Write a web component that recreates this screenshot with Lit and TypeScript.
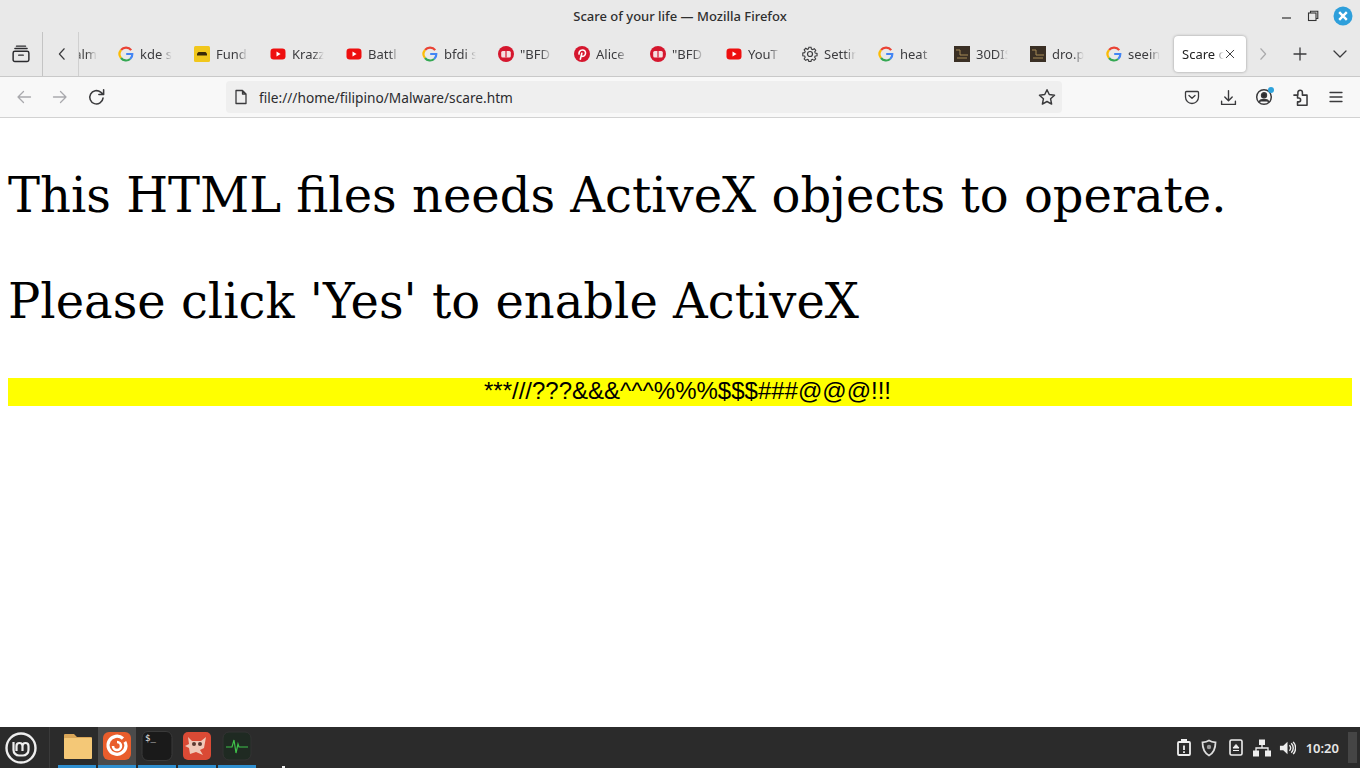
import { LitElement, html, css, svg } from "lit";
import { customElement } from "lit/decorators.js";

const G = svg`<svg width="16" height="16" viewBox="0 0 16 16" fill="none" stroke-width="2.200">
<path d="M13.200 4.200A6.400 6.400 0 0 0 3 4" stroke="#ea4335"/><path d="M3 4a6.400 6.400 0 0 0 0 8" stroke="#fbbc05"/><path d="M3 12a6.400 6.400 0 0 0 9.200 1" stroke="#34a853"/><path d="M12.200 13a6.200 6.200 0 0 0 2.100-5H8.200" stroke="#4285f4"/></svg>`;
const YT = svg`<svg width="16" height="16" viewBox="0 0 16 16"><rect x="0.500" y="2.500" width="15" height="11" rx="3.200" fill="#ee0f0f"/><path d="M6.500 5.600v4.800L10.600 8z" fill="#fff"/></svg>`;
const FUND = svg`<svg width="16" height="16" viewBox="0 0 16 16"><rect width="16" height="16" rx="1.500" fill="#f1c71c"/><path d="M3 9.500V7.500L4.500 6h7L13 7.500v2z" fill="#3a2a08"/></svg>`;
const BFD = svg`<svg width="16" height="16" viewBox="0 0 16 16"><circle cx="8" cy="8" r="8" fill="#d5172e"/><rect x="3.200" y="5" width="9.600" height="6.400" rx="1.500" fill="#f6dfe0"/><path d="M8 5v6.400" stroke="#d5172e" stroke-width="1.200"/></svg>`;
const PIN = svg`<svg width="16" height="16" viewBox="0 0 16 16"><circle cx="8" cy="8" r="8" fill="#d5172e"/><path d="M6.200 13.800 8 6.600M5.300 8.600C4.200 6.400 6 4 8.400 4c2.200 0 3.400 1.600 3.100 3.500-.3 1.900-1.700 3.100-3.100 2.800-.8-.2-1.200-.7-1.300-1.100" fill="none" stroke="#fff" stroke-width="1.600"/></svg>`;
const GEAR = svg`<svg width="16" height="16" viewBox="0 0 16 16" fill="none" stroke="#3a3a3c" stroke-width="1.200"><circle cx="8" cy="8" r="2.500"/><path d="M6.800 1h2.400l.4 2 1.300.6 1.800-1 1.600 1.800-1.100 1.700.5 1.300 2 .4v2.400l-2 .4-.6 1.300 1.100 1.700-1.700 1.700-1.700-1.100-1.300.6-.4 1.900H6.800l-.4-2-1.300-.5-1.700 1.100-1.700-1.700 1.100-1.700-.6-1.300-2-.4V7.300l2-.4.6-1.300-1.100-1.700 1.700-1.700 1.700 1.100 1.300-.6z" transform="translate(.6 .3) scale(.92)"/></svg>`;
const THUMB = svg`<svg width="16" height="16" viewBox="0 0 16 16"><rect width="16" height="16" fill="#3a2f24"/><path d="M2 4h4v5h8M3 12h10" stroke="#a58a55" stroke-width="1" fill="none"/></svg>`;

interface Tab { icon: unknown; label: string }
const tabs: Tab[] = [
  { icon: G, label: "kde s" },
  { icon: FUND, label: "Fund" },
  { icon: YT, label: "Krazz" },
  { icon: YT, label: "Battl" },
  { icon: G, label: "bfdi s" },
  { icon: BFD, label: "\"BFD" },
  { icon: PIN, label: "Alice" },
  { icon: BFD, label: "\"BFD" },
  { icon: YT, label: "YouT" },
  { icon: GEAR, label: "Settin" },
  { icon: G, label: "heat" },
  { icon: THUMB, label: "30DIS" },
  { icon: THUMB, label: "dro.p" },
  { icon: G, label: "seein" },
];

const ic = (w: number, body: unknown, stroke = "#3a3a3c") => svg`<svg width="${w}" height="${w}" viewBox="0 0 16 16" fill="none" stroke="${stroke}" stroke-width="1.300" stroke-linecap="round" stroke-linejoin="round">${body}</svg>`;

@customElement("app-root")
export class AppRoot extends LitElement {
  static styles = css`
    :host { display: flex; flex-direction: column; width: 1360px; height: 768px; overflow: hidden; position: relative; background: #fff; font-family: "Noto Sans", sans-serif; color: #2b2b2e; }
    .title { height: 32px; flex: none; background: #e9e9e9; display: flex; align-items: center; justify-content: center; position: relative; font-size: 13px; font-weight: 500; color: #2f2f2f; }
    .wm { position: absolute; right: 7px; top: 6px; display: flex; align-items: center; gap: 14px; }
    .wm svg { display: block; }
    .strip { height: 44px; flex: none; background: #e9e9e9; display: flex; align-items: stretch; border-bottom: 1px solid #c9c9c9; }
    .side { width: 42px; flex: none; display: flex; align-items: center; justify-content: center; border-right: 1px solid #c4c4c4; }
    .arrow { flex: none; width: 36px; display: flex; align-items: center; justify-content: flex-start; padding-left: 12px; box-sizing: border-box; }
    .partial { width: 30px; flex: none; box-sizing: border-box; display: flex; align-items: center; font-size: 13px; color: #444; overflow: hidden; justify-content: flex-end; padding-right: 11px; border-left: 1px solid #d0d0d0; margin-left: -1px; }
    .partial span { -webkit-mask-image: linear-gradient(90deg, rgba(0,0,0,.45), #000 35%, #000 55%, transparent); mask-image: linear-gradient(90deg, rgba(0,0,0,.45), #000 35%, #000 55%, transparent); }
    .tab { width: 76px; flex: none; box-sizing: border-box; display: flex; align-items: center; gap: 6px; padding-left: 10px; padding-right: 12px; font-size: 13px; color: #3c3c3f; white-space: nowrap; }
    .tab svg { flex: none; display: block; }
    .tab span { overflow: hidden; flex: 1; min-width: 0; -webkit-mask-image: linear-gradient(90deg, #000 65%, transparent); mask-image: linear-gradient(90deg, #000 65%, transparent); }
    .tab.active { width: 72px; margin: 4px 2px 4px 2px; padding: 0 10px 0 8px; background: #fff; border-radius: 4px; box-shadow: 0 0 3px rgba(0,0,0,.35); gap: 0; color: #222; }
    .tab.active span { -webkit-mask-image: linear-gradient(90deg, #000 75%, transparent); mask-image: linear-gradient(90deg, #000 75%, transparent); }
    .ctl { flex: none; display: flex; align-items: center; justify-content: center; width: 40px; }
    .ctl.next { width: 30px; margin-right: 2px; }
    .nav { height: 40px; flex: none; background: #f8f8f8; display: flex; align-items: center; border-bottom: 1px solid #d2d2d2; }
    .nb { width: 36px; flex: none; display: flex; align-items: center; justify-content: center; position: relative; }
    .nb.first { margin-left: 6px; }
    .url { width: 836px; height: 32px; margin: 0 112px; flex: none; box-sizing: border-box; background: #efefef; border-radius: 4px; display: flex; align-items: center; padding: 0 6px 0 7px; font-size: 13.7px; color: #2b2b2e; gap: 10px; }
    .url span { flex: 1; }
    .right { display: flex; align-items: center; }
    .dot { position: absolute; width: 6px; height: 6px; border-radius: 50%; background: #2ea3dc; right: 8px; top: -1px; }
    .page { flex: 1; min-height: 0; padding: 0 8px; }
    h1 { font-family: "DejaVu Serif", serif; font-size: 48px; font-weight: 400; color: #000; margin: 0; line-height: 56px; }
    h1.a { margin-top: 49px; }
    h1.b { margin-top: 50px; }
    .warn { margin-top: 49px; height: 28px; background: #ff0; font-family: "Liberation Sans", sans-serif; font-size: 24px; line-height: 26px; color: #000; text-align: center; padding-left: 15px; box-sizing: border-box; white-space: nowrap; }
    .bar { height: 41px; flex: none; background: #2b2b2b; display: flex; align-items: stretch; position: relative; }
    .menu { width: 50px; flex: none; display: flex; align-items: center; justify-content: flex-start; padding-left: 5px; box-sizing: border-box; border-right: 1px solid #3a3a3a; }
    .launch { display: flex; margin-left: 8px; }
    .app { width: 38px; margin-right: 2px; flex: none; display: flex; align-items: center; justify-content: center; position: relative; padding-bottom: 3px; box-sizing: border-box; }
    .app::after { content: ""; position: absolute; left: 0; right: 0; bottom: 0; height: 3px; background: #2f8fd0; }
    .app.on { background: #4b4b4b; }
    .folder { margin-left: 2px; }
    .prompt { font-family: "DejaVu Sans Mono", monospace; font-size: 9px; fill: #eee; }
    .tray { margin-left: auto; display: flex; align-items: center; gap: 10px; padding-right: 3px; }
    .tray .s1 { margin-left: -1px; margin-right: -1px; }
    .tray .s2 { margin-left: 2px; }
    .tray .s3 { margin-left: -2px; }
    .clock { color: #e6e6e6; font-size: 13px; font-weight: 600; margin-right: -1px; }
    .grip { width: 9px; height: 31px; background: #454545; }
    .cursor { position: absolute; left: 282px; top: 39px; width: 3px; height: 2px; background: #eee; }
  `;

  render() {
    return html`
      <div class="title">Scare of your life — Mozilla Firefox
        <div class="wm">
          <svg width="12" height="12" viewBox="0 0 12 12"><path d="M1 8h9" stroke="#333" stroke-width="1.200"/></svg>
          <svg width="12" height="12" viewBox="0 0 12 12" fill="none" stroke="#333" stroke-width="1.100"><rect x="1.500" y="3" width="7.500" height="7.500"/><path d="M3.500 3V1.200h7.300v7.300H9"/></svg>
          <svg width="20" height="20" viewBox="0 0 20 20"><circle cx="10" cy="10" r="9.500" fill="#2e9fdb"/><path d="M6.200 6.200l7.600 7.600M13.800 6.200l-7.600 7.600" stroke="#fff" stroke-width="2.400"/></svg>
        </div>
      </div>
      <div class="strip">
        <div class="side">${ic(18, svg`<rect x="1" y="5.600" width="14" height="9" rx="1.500"/><path d="M2.600 3.200h10.800M4 1h8M6 9h4"/>`, "#2b2b2e")}</div>
        <div class="arrow">${ic(14, svg`<path d="M10.500 2 5 8l5.500 6"/>`)}</div>
        <div class="partial"><span>alm</span></div>
        ${tabs.map((t) => html`<div class="tab">${t.icon}<span>${t.label}</span></div>`)}
        <div class="tab active"><span>Scare o</span>${ic(12, svg`<path d="M3 3l10 10M13 3 3 13"/>`)}</div>
        <div class="ctl next">${ic(14, svg`<path d="M5.500 2 11 8l-5.500 6"/>`, "#a9a9ab")}</div>
        <div class="ctl">${ic(16, svg`<path d="M8 2v12M2 8h12"/>`)}</div>
        <div class="ctl">${ic(16, svg`<path d="M2 5l6 6 6-6"/>`)}</div>
      </div>
      <div class="nav">
        <div class="nb first">${ic(16, svg`<path d="M14.500 8H2M7.500 2.500 2 8l5.500 5.500"/>`, "#a9a9ad")}</div>
        <div class="nb">${ic(16, svg`<path d="M1.500 8H14M8.500 2.500 14 8l-5.500 5.500"/>`, "#a9a9ad")}</div>
        <div class="nb">${ic(19, svg`<path d="M13.500 8.500A5.600 5.600 0 1 1 11.500 3.500L14 5.500M14 1.500v4h-4"/>`)}</div>
        <div class="url">
          ${ic(16, svg`<path d="M3 1.500h6.500l3.500 3.500v9.500H3zM9.500 1.500V5H13"/>`)}
          <span>file:///home/filipino/Malware/scare.htm</span>
          ${ic(18, svg`<path d="M8 1.500l2 4.300 4.700.6-3.500 3.200.9 4.700L8 12l-4.100 2.300.9-4.700L1.300 6.400 6 5.800z"/>`)}
        </div>
        <div class="right">
          <div class="nb">${ic(16, svg`<path d="M2.500 2.500h11a1 1 0 0 1 1 1V8a6.500 6.500 0 0 1-13 0V3.500a1 1 0 0 1 1-1zM5 6.500 8 9.300l3-2.800"/>`)}</div>
          <div class="nb">${ic(17, svg`<path d="M8 1.500v9M4.500 7.500 8 11l3.500-3.500M1.500 11.500v3h13v-3"/>`)}</div>
          <div class="nb">${ic(18, svg`<circle cx="8" cy="8" r="6.500"/><circle cx="8" cy="6.500" r="2.200" fill="#2b2b2e"/><path d="M4 12c1-2.300 7-2.300 8 0" fill="#2b2b2e"/>`)}<i class="dot"></i></div>
          <div class="nb">${ic(19, svg`<path d="M2.500 6h3.300V3.800a1.900 1.900 0 0 1 3.800 0V6h3.900v8.500h-8v-2.800h1a1.600 1.600 0 0 0 0-3.200h-1V6.900"/>`)}</div>
          <div class="nb">${ic(16, svg`<path d="M2 3.500h12M2 8h12M2 12.500h12"/>`)}</div>
        </div>
      </div>
      <div class="page">
        <h1 class="a">This HTML files needs ActiveX objects to operate.</h1>
        <h1 class="b">Please click 'Yes' to enable ActiveX</h1>
        <div class="warn">***///???&amp;&amp;&amp;^^^%%%$$$###@@@!!!</div>
      </div>
      <div class="bar">
        <div class="menu">
          <svg width="32" height="32" viewBox="0 0 32 32" fill="none" stroke="#eee"><circle cx="16" cy="16" r="14.500" stroke-width="2.400"/><path d="M8.500 10v8a5.500 5.500 0 0 0 5.500 5.500h4a5.500 5.500 0 0 0 5.500-5.500v-4a3 3 0 0 0-6 0v5M17.500 14a3 3 0 0 0-6 0v5" stroke-width="2.200"/></svg>
        </div>
        <div class="launch">
          <div class="app">
            <svg class="folder" width="30" height="28" viewBox="0 0 30 28"><path d="M1 3a1 1 0 0 1 1-1h9l3 3h14a1 1 0 0 1 1 1v3H1z" fill="#d9a658"/><rect x="1" y="6" width="28" height="21" rx="1" fill="#f4c877"/></svg>
          </div>
          <div class="app on">
            <svg width="30" height="30" viewBox="0 0 30 30"><rect x="1" y="1" width="28" height="28" rx="6" fill="#e95d2c"/><path d="M21 7.500A9 9 0 1 0 24 15c0-1.500-.4-3-1.200-4.200" fill="none" stroke="#fff" stroke-width="3.200"/><path d="M11 15a4 4 0 1 0 4-4" fill="none" stroke="#fff" stroke-width="2.600"/></svg>
          </div>
          <div class="app">
            <svg width="32" height="30" viewBox="0 0 32 30"><rect x="1" y="0.500" width="30" height="29" rx="6" fill="#1a1a1a" stroke="#3a3a3a"/><text class="prompt" x="4" y="10">$_</text></svg>
          </div>
          <div class="app">
            <svg width="30" height="30" viewBox="0 0 30 30"><rect x="1" y="1" width="28" height="28" rx="5" fill="#da4a35"/><path d="M6 6l4 4h9l5-4-2 11-4 2 3 5-7-3-6 2-1-6-4-2 4-2z" fill="#f0c9b8"/><circle cx="12" cy="13" r="2" fill="#5a3a32"/><circle cx="18" cy="13" r="2" fill="#5a3a32"/></svg>
          </div>
          <div class="app">
            <svg width="30" height="30" viewBox="0 0 30 30"><rect x="1" y="1" width="28" height="28" rx="6" fill="#1f2a22" stroke="#333"/><path d="M4 16h6l2-7 2 13 2-9 1 3h9" fill="none" stroke="#3fc24a" stroke-width="1.200"/></svg>
          </div>
        </div>
        <div class="cursor"></div>
        <div class="tray">
          <svg width="14" height="17" viewBox="0 0 14 17" fill="none" stroke="#eee" stroke-width="1.800"><rect x="1" y="3" width="12" height="13" rx="1"/><rect x="4" y="0" width="6" height="4" fill="#eee" stroke="none"/><path d="M7 6.500v4.500M7 12.300v1.700"/></svg>
          <svg class="s1" width="18" height="18" viewBox="0 0 18 18" fill="none" stroke="#ddd" stroke-width="1.800"><path d="M9 1.500c2 1.300 4.300 1.700 6.500 1.800 0 6-1.800 10.700-6.500 13.200C4.300 14 2.500 9.300 2.500 3.300 4.700 3.200 7 2.800 9 1.500z"/><circle cx="9" cy="8" r="2.200" fill="#999" stroke="none"/></svg>
          <svg class="s2" width="14" height="17" viewBox="0 0 14 17" fill="none" stroke="#eee" stroke-width="1.600"><rect x="1" y="1" width="12" height="15" rx="1.500"/><path d="M7 5.500 4 9h6zM4 11.500h6" fill="#eee" stroke-width="1"/></svg>
          <svg width="18" height="18" viewBox="0 0 18 18" fill="#eee"><rect x="6" y="0.500" width="6" height="5.500"/><rect x="0" y="11.500" width="6" height="6"/><rect x="12" y="11.500" width="6" height="6"/><path d="M9 6v3M3 12V9h12v3" stroke="#eee" stroke-width="1.300" fill="none"/></svg>
          <svg class="s3" width="17" height="18" viewBox="0 0 18 18" fill="#eee"><path d="M1 6.500h3.500L9 2.500v13l-4.500-4H1z"/><path d="M11 6a4 4 0 0 1 0 6M13 4a7 7 0 0 1 0 10M15 2.500a9.500 9.500 0 0 1 0 13" fill="none" stroke="#eee" stroke-width="1.500"/></svg>
          <span class="clock">10:20</span>
          <div class="grip"></div>
        </div>
      </div>
    `;
  }
}
